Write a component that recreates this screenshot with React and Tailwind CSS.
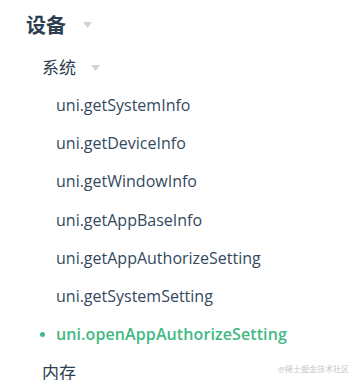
const ITEMS = [
  "uni.getSystemInfo",
  "uni.getDeviceInfo",
  "uni.getWindowInfo",
  "uni.getAppBaseInfo",
  "uni.getAppAuthorizeSetting",
  "uni.getSystemSetting",
];

function Caret({ className }) {
  return (
    <svg width="9" height="6" viewBox="0 0 9 6" className={className}>
      <path d="M0 0 L9 0 L4.5 6 Z" fill="#cfd3d6" />
    </svg>
  );
}

export default function App() {
  return (
    <div
      className="relative w-[353px] h-[380px] overflow-hidden bg-white text-[#2c3e50]"
      style={{ fontFamily: '"Open Sans", "Noto Sans CJK SC", sans-serif' }}
    >
      <div className="pt-[12px] pl-[26px] flex items-center gap-[17px]">
        <span className="text-[20px] font-bold leading-[28px]">设备</span>
        <Caret className="mt-[-2px]" />
      </div>

      <div className="mt-[15px] pl-[42px] flex items-center gap-[15px]">
        <span className="text-[17px] leading-[26px]">系统</span>
        <Caret />
      </div>

      <ul className="mt-[5px] pl-[56px]">
        {ITEMS.map(t => (
          <li key={t} className="h-[38.2px] flex items-center text-[16px] text-[#34495e]">
            {t}
          </li>
        ))}
        <li className="relative h-[38.2px] flex items-center text-[16px] tracking-[0.1px] font-semibold text-[#42b983]">
          <span className="absolute left-[-16px] w-[5px] h-[5px] rounded-full bg-[#42b983]" />
          uni.openAppAuthorizeSetting
        </li>
      </ul>

      <div className="pl-[42px] h-[38px] flex items-center text-[17px]">内存</div>

      <div className="absolute right-[4px] bottom-[5px] text-[8px] text-[#c4c7cc]">
        @稀土掘金技术社区
      </div>
    </div>
  );
}
